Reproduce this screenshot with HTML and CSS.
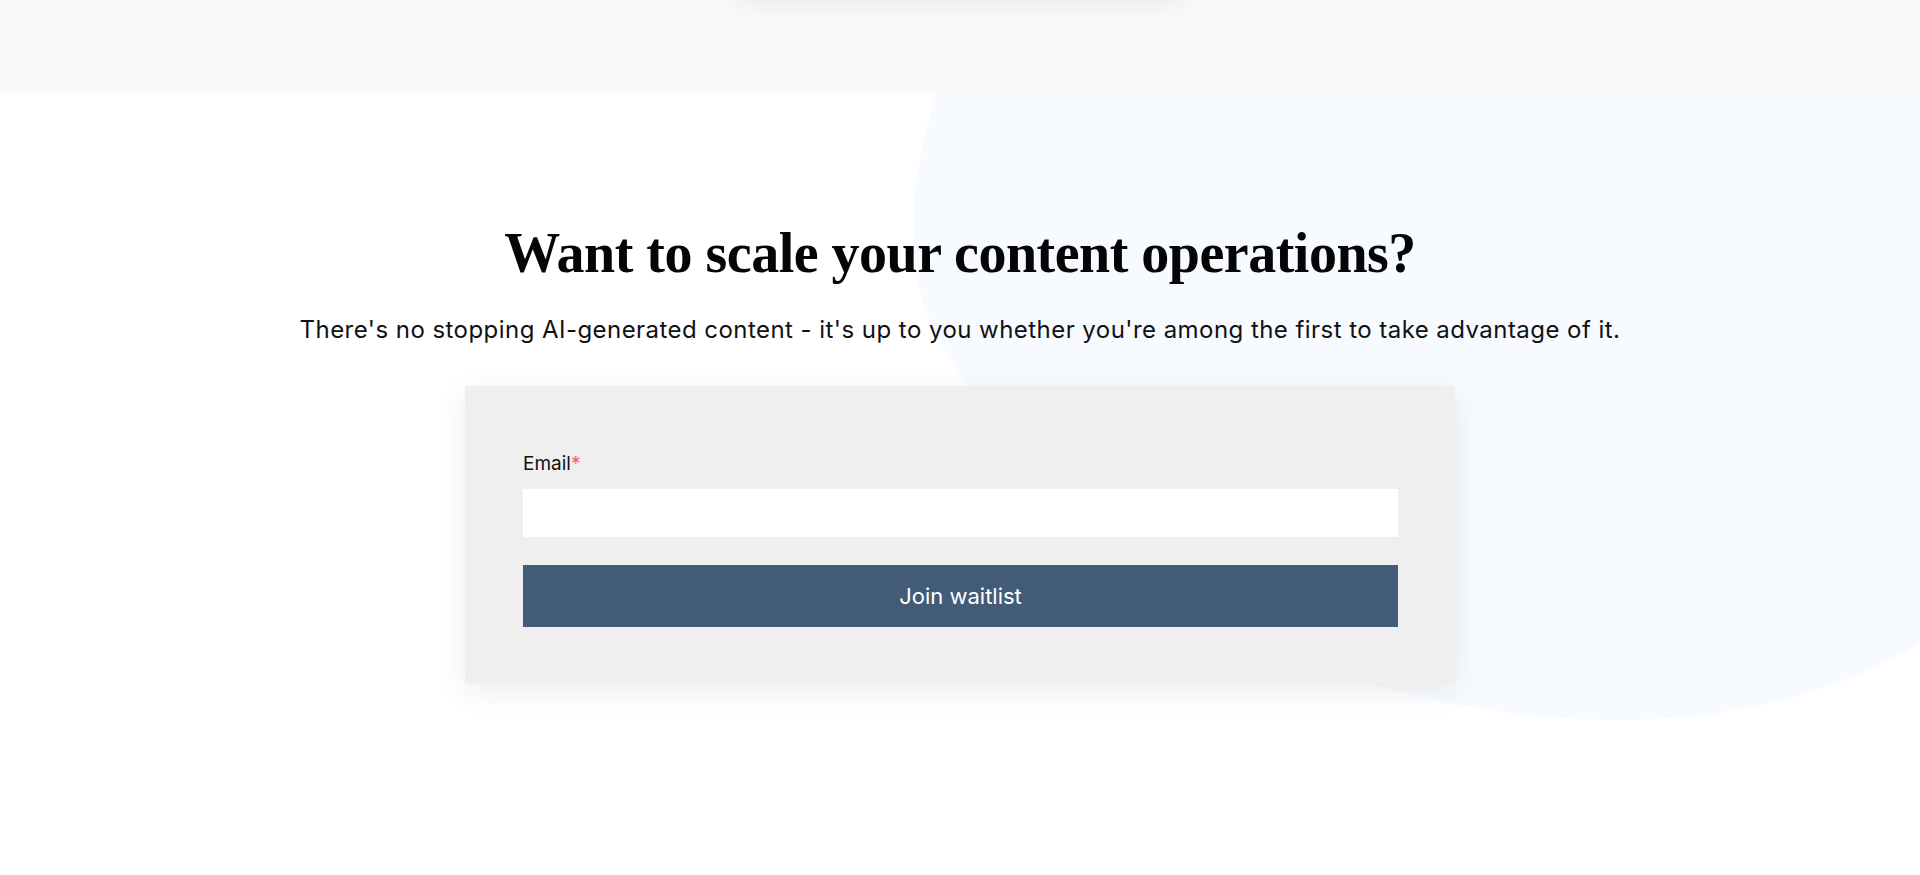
FILE: index.html
```html
<!DOCTYPE html>
<html lang="en">
<head>
    <meta charset="UTF-8">
    <meta name="viewport" content="width=device-width, initial-scale=1.0">
    <title>Join the waitlist</title>
    <link rel="stylesheet" href="styles.css">
</head>
<body>
    <div class="top-band">
        <div class="band-card"></div>
    </div>
    <section class="cta">
        <svg class="blob" viewBox="0 0 1920 783" preserveAspectRatio="none" aria-hidden="true">
            <path d="M945 -20 C925 30, 912 90, 913 150 C914 240, 975 300, 1030 378 C1140 534, 1400 628, 1616 628 C1760 628, 1860 588, 1920 551 L1920 -20 Z" fill="#f7faff"/>
        </svg>
        <div class="cta-inner">
            <h1>Want to scale your content operations?</h1>
            <p class="lead">There's no stopping AI-generated content - it's up to you whether you're among the first to take advantage of it.</p>
            <form class="waitlist" onsubmit="return false">
                <label for="email">Email<span class="req">*</span></label>
                <input type="email" id="email" autocomplete="off">
                <button type="submit">Join waitlist</button>
            </form>
        </div>
    </section>
</body>
</html>
```

FILE: styles.css
```css
body {
    margin: 0;
    font-family: 'Inter', 'Noto Sans', sans-serif;
    background-color: #ffffff;
    color: #0a0a0a;
}
.top-band {
    height: 92px;
    background-color: #f9f9f9;
    overflow: hidden;
}
.band-card {
    width: 440px;
    height: 60px;
    margin: -60px auto 0;
    background-color: #f9f9f9;
    box-shadow: 0 0 28px rgba(0, 0, 0, .09);
}
.cta {
    position: relative;
    height: 783px;
    overflow: hidden;
}
.blob {
    position: absolute;
    top: 0;
    left: 0;
    width: 100%;
    height: 100%;
}
.cta-inner {
    position: relative;
    display: flex;
    flex-direction: column;
    align-items: center;
    padding-top: 129px;
}
.cta-inner h1 {
    margin: 0;
    font-family: 'Liberation Serif', 'DejaVu Serif', serif;
    font-weight: 700;
    font-size: 56px;
    line-height: 64px;
    letter-spacing: -.5px;
    color: #050505;
}
.lead {
    margin: 29px 0 0;
    font-size: 24px;
    line-height: 32px;
    letter-spacing: .45px;
    color: #111111;
}
.waitlist {
    width: 990px;
    box-sizing: border-box;
    margin-top: 40px;
    padding: 66px 57px 56px 58px;
    display: flex;
    flex-direction: column;
    background-color: #efefef;
    box-shadow: 0 8px 30px rgba(0, 0, 0, .08);
}
.waitlist label {
    font-size: 19px;
    line-height: 24px;
    color: #111111;
}
.req {
    color: #f25c5c;
}
.waitlist input {
    height: 48px;
    margin-top: 13px;
    border: 0;
    outline: none;
    background-color: #ffffff;
    padding: 0 14px;
    font-family: inherit;
    font-size: 18px;
}
.waitlist button {
    height: 62px;
    margin-top: 28px;
    border: 0;
    background-color: #425c78;
    color: #ffffff;
    font-family: inherit;
    font-size: 22px;
    cursor: pointer;
}
```
